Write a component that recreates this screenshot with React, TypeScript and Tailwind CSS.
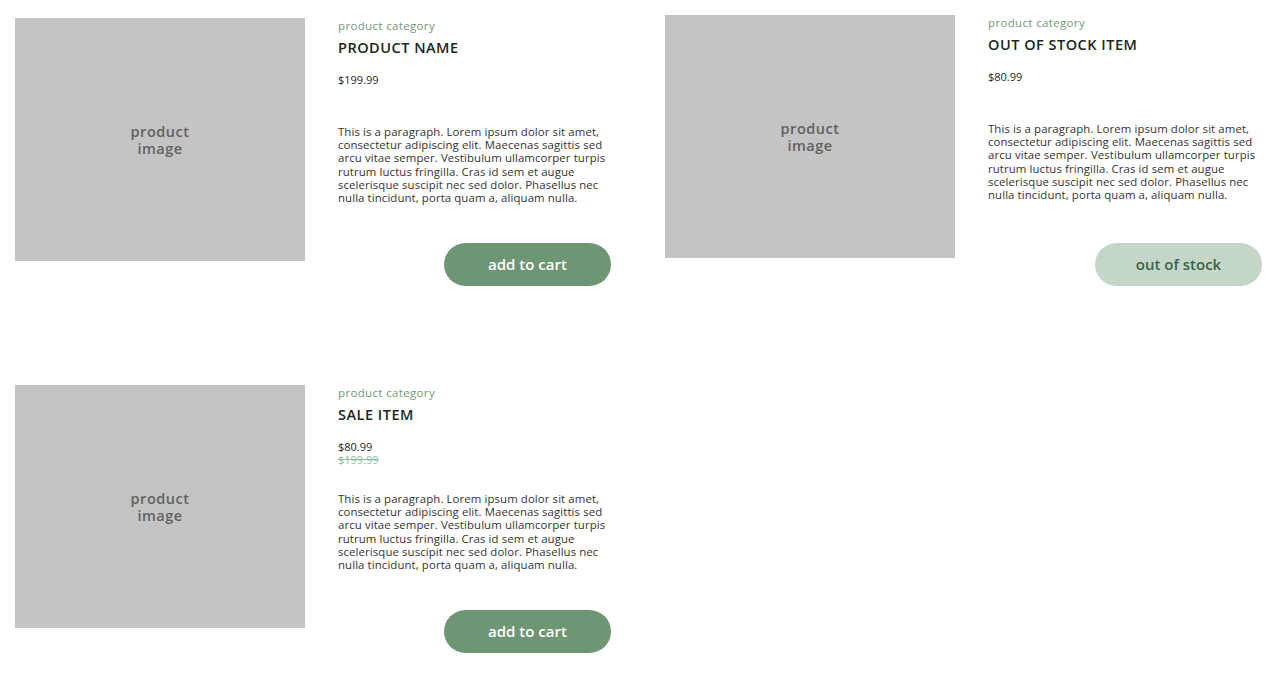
import React from "react";

const PARA = [
  "This is a paragraph. Lorem ipsum dolor sit amet,",
  "consectetur adipiscing elit. Maecenas sagittis sed",
  "arcu vitae semper. Vestibulum ullamcorper turpis",
  "rutrum luctus fringilla. Cras id sem et augue",
  "scelerisque suscipit nec sed dolor. Phasellus nec",
  "nulla tincidunt, porta quam a, aliquam nulla.",
];

type CardProps = {
  name: string;
  price: string;
  oldPrice?: string;
  outOfStock?: boolean;
  shifted?: boolean;
};

function Card({ name, price, oldPrice, outOfStock, shifted }: CardProps) {
  return (
    <div className={`flex gap-[33px] ${shifted ? "-mt-[3px]" : ""}`}>
      <div className="w-[290px] h-[243px] bg-[#c4c4c4] flex items-center justify-center shrink-0">
        <div className="mt-[2px] text-center text-[14.5px] leading-[20px] font-semibold tracking-[0.5px] text-[#626262] flex flex-col -space-y-[3px]">
          <span>product</span>
          <span>image</span>
        </div>
      </div>
      <div className={`${shifted ? "w-[274px] h-[271px]" : "w-[273px] h-[268px]"} flex flex-col`}>
        <div className="mt-[1px] text-[11.5px] leading-[14px] tracking-[0.35px] text-[#6f9a76]">product category</div>
        <div className="mt-[6px] text-[14.5px] leading-[18px] font-semibold text-[#1c2620] tracking-[0.5px]">
          {name}
        </div>
        <div className="mt-[16px] h-[52px] text-[11px] leading-[13px]">
          <div className="text-[#1f1f1f]">{price}</div>
          {oldPrice && <div className="text-[#8fc09a] line-through">{oldPrice}</div>}
        </div>
        <div className="text-[11.4px] leading-[13.2px] tracking-[0.1px] text-[#333333]">
          {PARA.map((l, i) => (
            <div key={i} className="whitespace-nowrap">
              {l}
            </div>
          ))}
        </div>
        <div className="mt-auto self-end">
          {outOfStock ? (
            <div className="w-[167px] h-[43px] rounded-full bg-[#c4d6c8] flex items-center justify-center text-[15px] font-semibold text-[#3b6444]">
              out of stock
            </div>
          ) : (
            <div className="w-[167px] h-[43px] rounded-full bg-[#6f9674] flex items-center justify-center text-[15px] font-semibold text-white">
              add to cart
            </div>
          )}
        </div>
      </div>
    </div>
  );
}

export default function App() {
  return (
    <div
      className="w-[1279px] h-[677px] bg-white overflow-hidden"
      style={{ fontFamily: '"Open Sans", "Noto Sans", sans-serif' }}
    >
      <div className="pl-[15px] pt-[18px] grid grid-cols-[650px_597px] gap-y-[99px]">
        <Card name="PRODUCT NAME" price="$199.99" />
        <Card name="OUT OF STOCK ITEM" price="$80.99" outOfStock shifted />
        <Card name="SALE ITEM" price="$80.99" oldPrice="$199.99" />
      </div>
    </div>
  );
}
